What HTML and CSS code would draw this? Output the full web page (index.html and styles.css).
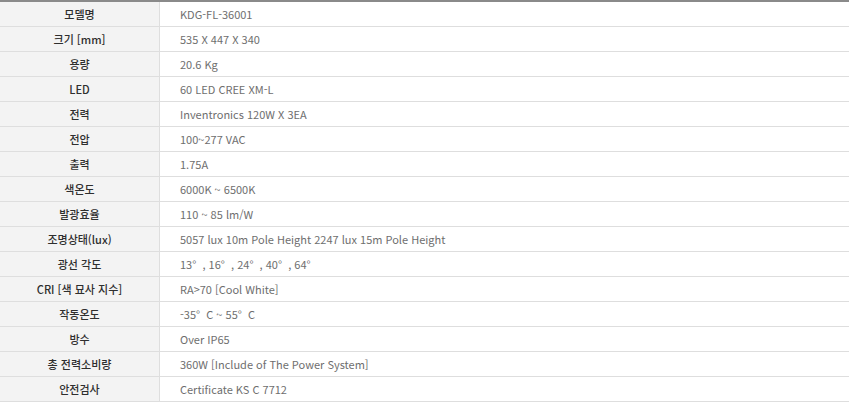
FILE: index.html
```html
<!DOCTYPE html>
<html lang="ko">
<head>
<meta charset="utf-8">
<link rel="stylesheet" href="styles.css">
</head>
<body>
<table class="spec">
  <tbody>
    <tr><th>모델명</th><td>KDG-FL-36001</td></tr>
    <tr><th>크기 [mm]</th><td>535 X 447 X 340</td></tr>
    <tr><th>용량</th><td>20.6 Kg</td></tr>
    <tr><th>LED</th><td>60 LED CREE XM-L</td></tr>
    <tr><th>전력</th><td>Inventronics 120W X 3EA</td></tr>
    <tr><th>전압</th><td>100~277 VAC</td></tr>
    <tr><th>출력</th><td>1.75A</td></tr>
    <tr><th>색온도</th><td>6000K ~ 6500K</td></tr>
    <tr><th>발광효율</th><td>110 ~ 85 lm/W</td></tr>
    <tr><th>조명상태(lux)</th><td>5057 lux 10m Pole Height 2247 lux 15m Pole Height</td></tr>
    <tr><th>광선 각도</th><td>13°&nbsp;&nbsp;, 16°&nbsp;&nbsp;, 24°&nbsp;&nbsp;, 40°&nbsp;&nbsp;, 64°</td></tr>
    <tr><th>CRI [색 묘사 지수]</th><td>RA&gt;70 [Cool White]</td></tr>
    <tr><th>작동온도</th><td>-35°&nbsp;&nbsp;C ~ 55°&nbsp;&nbsp;C</td></tr>
    <tr><th>방수</th><td>Over IP65</td></tr>
    <tr><th>총 전력소비량</th><td>360W [Include of The Power System]</td></tr>
    <tr><th>안전검사</th><td>Certificate KS C 7712</td></tr>
  </tbody>
</table>
</body>
</html>
```
FILE: styles.css
```css
html, body {
  margin: 0;
  padding: 0;
  background: #ffffff;
}
.spec {
  width: 849px;
  border-collapse: collapse;
  border-top: 2px solid #8a8a8a;
  font-family: "Noto Sans CJK KR", "Noto Sans", sans-serif;
  font-size: 11px;
}
.spec th,
.spec td {
  height: 24px;
  padding: 0;
  border-bottom: 1px solid #dedede;
  line-height: 14px;
}
.spec th {
  width: 159px;
  background: #f3f3f3;
  border-right: 1px solid #dedede;
  color: #2e2e2e;
  font-weight: 500;
  text-align: center;
}
.spec td {
  padding-left: 20px;
  color: #6e6e6e;
  text-align: left;
}
```
